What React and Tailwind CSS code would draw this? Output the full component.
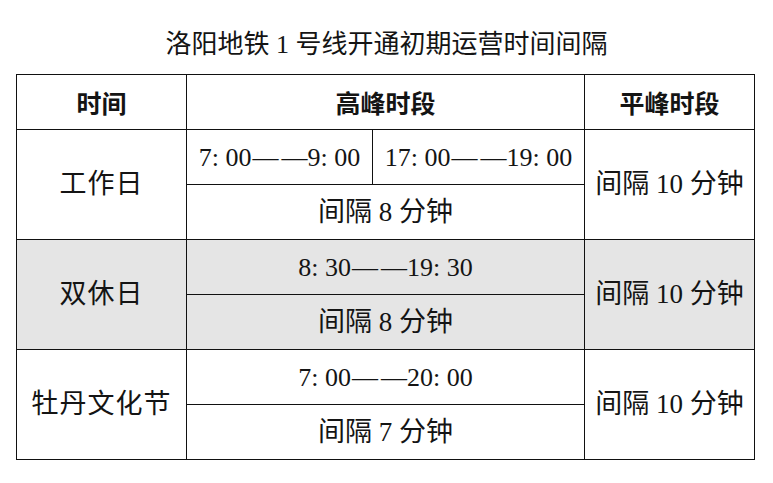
const serif = "font-['Liberation_Serif','Noto_Sans_CJK_SC',serif]";
const sans = "font-['Noto_Sans_CJK_SC',sans-serif]";

const rows = [
  {
    day: '工作日',
    peak: [
      ['7: 00', '9: 00'],
      ['17: 00', '19: 00'],
    ],
    peakGap: '间隔 8 分钟',
    offGap: '间隔 10 分钟',
    shaded: false,
  },
  {
    day: '双休日',
    peak: [['8: 30', '19: 30']],
    peakGap: '间隔 8 分钟',
    offGap: '间隔 10 分钟',
    shaded: true,
  },
  {
    day: '牡丹文化节',
    peak: [['7: 00', '20: 00']],
    peakGap: '间隔 7 分钟',
    offGap: '间隔 10 分钟',
    shaded: false,
  },
];

const cell = 'border border-[#111] p-0 text-center align-middle';

function Range({ from, to }) {
  return (
    <span className="text-[26px]">
      {from}
      <span className="ml-[1px] mr-[3px]">—</span>—{to}
    </span>
  );
}

export default function App() {
  return (
    <div className={`h-[483px] w-[773px] bg-white text-[#141414] ${serif}`}>
      <h1 className="pt-[32px] text-center text-[26px] leading-[26px] font-normal">
        洛阳地铁 1 号线开通初期运营时间间隔
      </h1>

      <table className="mt-[16px] ml-[16px] w-[738px] table-fixed border-collapse text-[27px] leading-none">
        <colgroup>
          <col className="w-[170px]" />
          <col className="w-[186px]" />
          <col className="w-[212px]" />
          <col className="w-[170px]" />
        </colgroup>
        <thead>
          <tr className="h-[55px]">
            <th className={`${cell} ${sans} text-[25px] font-bold`}>时间</th>
            <th colSpan={2} className={`${cell} ${sans} text-[25px] font-bold`}>
              高峰时段
            </th>
            <th className={`${cell} ${sans} text-[25px] font-bold`}>平峰时段</th>
          </tr>
        </thead>
        <tbody>
          {rows.map((row) => {
            const bg = row.shaded ? 'bg-[#e5e5e5]' : 'bg-white';
            return [
              <tr key={row.day + 'a'} className={`h-[55px] ${bg}`}>
                <td rowSpan={2} className={`${cell} tracking-[1px]`}>
                  {row.day}
                </td>
                {row.peak.length === 2 ? (
                  <>
                    <td className={cell}>
                      <Range from={row.peak[0][0]} to={row.peak[0][1]} />
                    </td>
                    <td className={cell}>
                      <Range from={row.peak[1][0]} to={row.peak[1][1]} />
                    </td>
                  </>
                ) : (
                  <td colSpan={2} className={cell}>
                    <Range from={row.peak[0][0]} to={row.peak[0][1]} />
                  </td>
                )}
                <td rowSpan={2} className={cell}>
                  {row.offGap}
                </td>
              </tr>,
              <tr key={row.day + 'b'} className={`h-[55px] ${bg}`}>
                <td colSpan={2} className={cell}>
                  {row.peakGap}
                </td>
              </tr>,
            ];
          })}
        </tbody>
      </table>
    </div>
  );
}
